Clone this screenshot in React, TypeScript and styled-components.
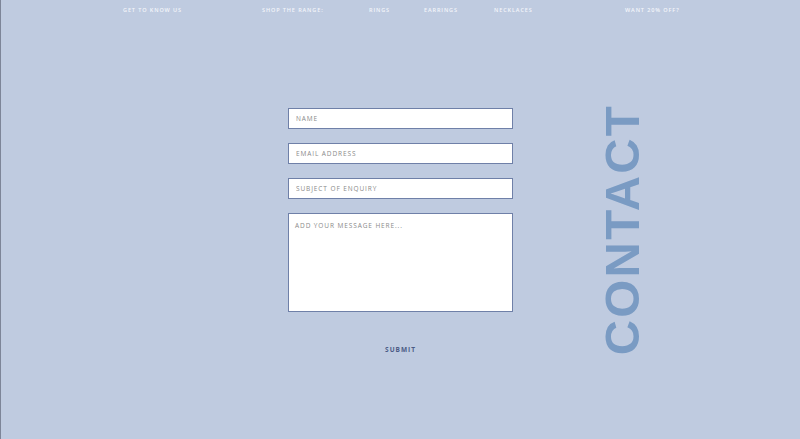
import React from "react"
import styled, { createGlobalStyle } from "styled-components"

const GlobalStyle = createGlobalStyle`
    html, body {
        margin: 0;
        padding: 0;
        background: #bfcbe0;
    }
    body {
        font-family: "Open Sans", "DejaVu Sans", sans-serif;
    }
`

const Page = styled.div`
    width: 800px;
    height: 439px;
    box-sizing: border-box;
    border-left: 1px solid #7d8598;
    background: #bfcbe0;
    overflow: hidden;
`

const Nav = styled.nav`
    display: grid;
    grid-template-columns: 139px 107px 55px 70px 131px auto;
    padding: 6px 0 0 122px;
    height: 20px;
    box-sizing: border-box;
`

const NavItem = styled.a`
    font-size: 5.5px;
    font-weight: 600;
    letter-spacing: 0.9px;
    color: #f4f6fb;
    text-transform: uppercase;
    white-space: nowrap;
    text-decoration: none;
    line-height: 8px;
`

const Main = styled.main`
    display: grid;
    grid-template-columns: 1fr 225px 1fr;
    padding-top: 88px;
`

const Form = styled.form`
    grid-column: 2;
    display: flex;
    flex-direction: column;
    gap: 14px;
`

const Field = styled.input`
    height: 21px;
    box-sizing: border-box;
    border: 1px solid #6f80a8;
    background: #fff;
    padding: 0 7px;
    margin: 0;
    font-family: "Open Sans", "DejaVu Sans", sans-serif;
    font-size: 6.5px;
    letter-spacing: 0.9px;
    outline: none;
    &::placeholder {
        color: #8a8a8a;
        text-transform: uppercase;
    }
`

const Message = styled.textarea`
    height: 99px;
    box-sizing: border-box;
    border: 1px solid #6f80a8;
    background: #fff;
    padding: 7px 6px;
    margin: 0;
    resize: none;
    font-family: "Open Sans", "DejaVu Sans", sans-serif;
    font-size: 6.5px;
    letter-spacing: 0.9px;
    outline: none;
    &::placeholder {
        color: #8a8a8a;
    }
`

const Submit = styled.button`
    align-self: center;
    margin-top: 19px;
    background: none;
    border: none;
    padding: 0;
    font-family: "Open Sans", "DejaVu Sans", sans-serif;
    font-size: 6.5px;
    font-weight: 700;
    letter-spacing: 1px;
    color: #4b5b86;
    cursor: pointer;
`

const Side = styled.div`
    grid-column: 3;
    padding-left: 91px;
    margin-top: -4px;
`

const Heading = styled.h1`
    margin: 0;
    writing-mode: vertical-rl;
    transform: rotate(180deg);
    font-family: "Liberation Sans", Arial, sans-serif;
    font-weight: 700;
    font-size: 49px;
    line-height: 36px;
    letter-spacing: 2.2px;
    color: #7a9bc3;
`

const links = ["Get to know us", "Shop the range:", "Rings", "Earrings", "Necklaces", "Want 20% off?"]

export default function App() {
    return (
        <Page>
            <GlobalStyle />
            <Nav>
                {links.map((l) => (
                    <NavItem key={l}>{l}</NavItem>
                ))}
            </Nav>
            <Main>
                <Form onSubmit={(e) => e.preventDefault()}>
                    <Field placeholder="NAME" />
                    <Field placeholder="EMAIL ADDRESS" />
                    <Field placeholder="SUBJECT OF ENQUIRY" />
                    <Message placeholder="ADD YOUR MESSAGE HERE..." />
                    <Submit type="submit">SUBMIT</Submit>
                </Form>
                <Side>
                    <Heading>CONTACT</Heading>
                </Side>
            </Main>
        </Page>
    )
}
